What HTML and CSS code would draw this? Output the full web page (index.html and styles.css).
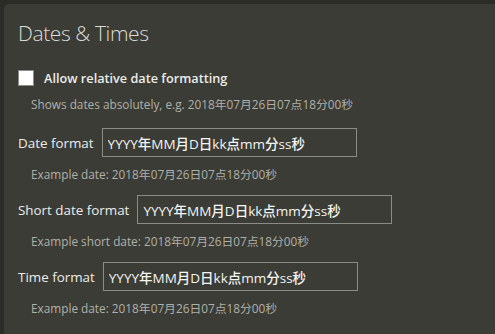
FILE: index.html
```html
<!DOCTYPE html>
<html lang="en">
<head>
    <meta charset="UTF-8">
    <meta name="viewport" content="width=device-width, initial-scale=1.0">
    <title>Dates &amp; Times</title>
    <link rel="stylesheet" href="styles.css">
</head>
<body>
    <div class="panel">
        <h1>Dates &amp; Times</h1>

        <label class="check-row">
            <input type="checkbox" id="relative">
            <span>Allow relative date formatting</span>
        </label>
        <p class="hint">Shows dates absolutely, e.g. 2018年07月26日07点18分00秒</p>

        <div class="group">
            <div class="field">
                <label for="dateFormat">Date format</label>
                <input type="text" id="dateFormat" value="YYYY年MM月D日kk点mm分ss秒">
            </div>
            <p class="hint">Example date: 2018年07月26日07点18分00秒</p>
        </div>

        <div class="group">
            <div class="field">
                <label for="shortDateFormat">Short date format</label>
                <input type="text" id="shortDateFormat" value="YYYY年MM月D日kk点mm分ss秒">
            </div>
            <p class="hint">Example short date: 2018年07月26日07点18分00秒</p>
        </div>

        <div class="group">
            <div class="field">
                <label for="timeFormat">Time format</label>
                <input type="text" id="timeFormat" value="YYYY年MM月D日kk点mm分ss秒">
            </div>
            <p class="hint">Example date: 2018年07月26日07点18分00秒</p>
        </div>
    </div>
</body>
</html>
```

FILE: styles.css
```css
body {
    font-family: "Open Sans", "Noto Sans CJK SC", sans-serif;
    background-color: #2b2c27;
    margin: 0;
    padding: 0;
    overflow: hidden;
}
.panel {
    margin: 4px 0 0 4px;
    padding: 14px 14px 20px;
    height: 400px;
    background: #3b3c36;
    border-radius: 5px 0 0 0;
}
h1 {
    margin: 0 0 22px;
    font-size: 21px;
    line-height: 30px;
    font-weight: 300;
    letter-spacing: -0.4px;
    color: #dcdcd8;
}
.check-row {
    display: flex;
    align-items: center;
    gap: 10px;
    height: 16px;
    font-size: 12.7px;
    font-weight: 600;
    color: #ececea;
}
.check-row input {
    appearance: none;
    width: 16px;
    height: 16px;
    margin: 0;
    background: #fff;
    border: 1px solid #8c8c86;
}
.hint {
    margin: 7px 0 0 13px;
    font-size: 11.8px;
    line-height: 20px;
    color: #b0b0a9;
}
.check-row + .hint {
    margin: 8px 0 14px 13px;
}
.group {
    margin-bottom: 11px;
}
.field {
    display: flex;
    align-items: center;
    gap: 8px;
}
.field label {
    font-size: 13.4px;
    color: #ececea;
}
.field input {
    width: 255px;
    height: 29px;
    box-sizing: border-box;
    margin: 0;
    padding: 0 5px;
    background: transparent;
    border: 1px solid #8c8c86;
    font-family: "Open Sans", "Noto Sans CJK SC", sans-serif;
    font-size: 13.5px;
    font-weight: 500;
    color: #f4f4f2;
    outline: none;
}
```
